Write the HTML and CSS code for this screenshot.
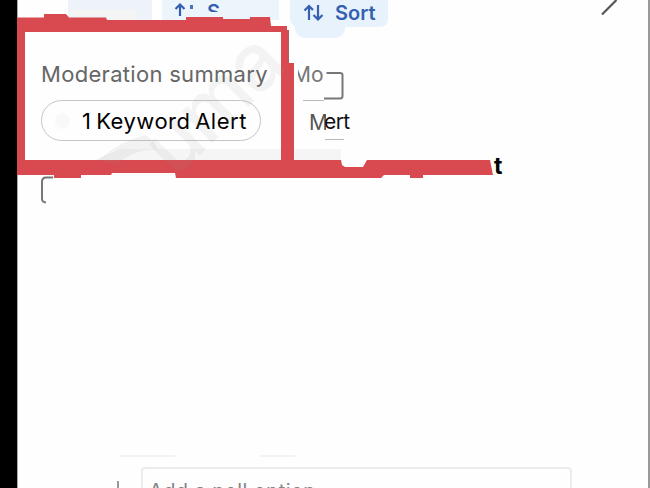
FILE: index.html
```html
<!doctype html>
<html lang="en">
    <head>
        <title>Moderation summary</title>
        <meta charset="utf-8">
        <meta name="viewport" content="width=device-width">
        <link rel="stylesheet" href="styles.css">
    </head>
    <body>
        <div class="rail"></div>
        <main>
            <header class="toolbar">
                <div class="chip chip-cut">
                    <svg width="12" height="16" viewBox="0 0 12 16"><path d="M6 15V4M1.5 8L6 3.5L10.500 8"/></svg>
                    <i class="dot"></i>
                    <span class="cut-s">S</span>
                </div>
                <div class="chip chip-sort">
                    <svg width="23" height="18" viewBox="0 0 23 18"><path d="M6 16V2M1.500 6.500L6 2L10 6M15 1V15M10.500 11L15 15.500L19.500 11"/></svg>
                    <span>Sort</span>
                </div>
                <svg class="pen" width="18" height="17" viewBox="0 0 18 17"><path d="M1 14.500L15.500 0"/></svg>
            </header>

            <div class="summary">
                <section class="card">
                    <h2>Moderation summary</h2>
                    <div class="pill"><i class="pill-icon"></i><span>1 Keyword Alert</span></div>
                </section>
                <section class="remnant">
                    <div class="remnant-title"><span>Mo</span></div>
                    <div class="remnant-alert"><span class="m">M</span><span class="ert">ert</span></div>
                </section>
            </div>

            <footer class="poll">
                <div class="rules"><i></i><i></i></div>
                <div class="poll-row">
                    <i class="tick"></i>
                    <div class="poll-input">Add a poll option</div>
                </div>
            </footer>
        </main>

        <!-- red highlight frame, with the loose box corners around it -->
        <svg class="marks" width="650" height="488" viewBox="0 0 650 488">
            <path class="shade" d="M72 10H136V20H106L104 16H68ZM120 149H281V160H95ZM295 149H341V163H295Z"/>
            <path class="frame" fill-rule="evenodd" d="M17 17.500H44V14H66L69 17.500H106L107 20H186V17H223V19H250V17H270L271 26H287V30H289V63H294V160H341L342 165L345 167H363L367 160H490L493 175H423V178H410V175H384L381 178H176L175 173H112L111 175H81V178H54V175H17ZM25 32V160H281V32Z"/>
            <path class="corner" d="M326.500 73H340Q342.500 73 342.500 75V96Q342.500 98.500 340 98.500H324M53 177.500H46Q42 177.500 42 182V199Q42 202 46 202.500"/>
            <path class="hair" d="M303 100.500H324M325 139.500H344"/>
            <path class="edge" d="M288.500 30V63"/>
            <path class="smear" d="M98 160Q122 140 146 135Q156 142 158 150Q135 148 116 165Z"/>
        </svg>
        <span class="watermark">uma</span>
        <b class="tail">t</b>
    </body>
</html>
```

FILE: styles.css
```css
* {
    box-sizing: border-box;
}
body {
    display: flex;
    position: relative;
    margin: 0;
    height: 488px;
    overflow: hidden;
    background: #fefefe;
    color: #111;
    font-family: Inter, "Liberation Sans", sans-serif;
}
h2 {
    margin: 0;
    font-weight: 400;
}
svg {
    display: block;
    fill: none;
    stroke: #3560b2;
    stroke-width: 2.2;
}
.rail {
    width: 17px;
    background: #000;
}
main {
    flex: 1;
    display: flex;
    flex-direction: column;
    border-left: 1px solid #aaa;
    border-right: 2px solid #999;
}

/* top bar */
.toolbar {
    display: flex;
    height: 38px;
    padding-left: 50px;
}
.chip {
    display: flex;
    background: #e8f2fc;
    color: #3560b2;
    font-weight: 600;
    font-size: 20px;
}
.chip-cut {
    width: 211px;
    height: 20px;
    padding-left: 106px;
    background: linear-gradient(90deg, #edf3f9 0 84px, #fff 84px 94px, #edf5fc 94px);
}
.chip-cut svg {
    margin-top: 1px;
}
.dot {
    width: 3px;
    height: 4px;
    margin: 5px 0 0 4px;
    background: #4970b9;
}
.cut-s {
    height: 12px;
    margin-left: 14px;
    overflow: hidden;
    line-height: 24px;
}
.chip-sort {
    position: relative;
    width: 98px;
    height: 27px;
    margin-left: 11px;
    padding-left: 13px;
    border-radius: 0 0 8px 8px;
}
.chip-sort::after {
    content: "";
    position: absolute;
    left: 5px;
    top: 24px;
    width: 50px;
    height: 14px;
    background: #e8f2fc;
    border-radius: 0 0 10px 10px;
}
.chip-sort svg {
    margin-top: 4px;
}
.chip-sort span {
    margin-left: 9px;
    line-height: 26px;
}
.pen {
    margin-left: 213px;
    stroke: #555;
}

/* summary card and what is left of the one beside it */
.summary {
    display: flex;
    height: 122px;
}
.card {
    width: 263px;
    padding: 21px 0 0 23px;
}
.card h2 {
    height: 30px;
    color: #666;
    font-size: 22px;
    line-height: 30px;
    letter-spacing: 0.3px;
    white-space: nowrap;
}
.pill {
    display: flex;
    align-items: center;
    width: 220px;
    height: 41px;
    margin-top: 11px;
    padding-left: 13px;
    border: 1px solid #c5c5c5;
    border-radius: 21px;
    font-size: 22px;
    white-space: nowrap;
}
.pill-icon {
    width: 15px;
    height: 16px;
    margin-right: 12px;
    border-radius: 8px;
    background: #f9f9f9;
}
.pill span {
    color: #000;
    letter-spacing: 0.5px;
    word-spacing: -2px;
}
.remnant {
    padding: 23px 0 0 17px;
    font-size: 21px;
}
.remnant-title {
    display: flex;
    width: 30px;
    height: 27px;
    overflow: hidden;
    color: #777;
    line-height: 27px;
}
.remnant-title span {
    margin-left: -6px;
}
.remnant-alert {
    display: flex;
    margin-top: 20px;
    padding-left: 11px;
    line-height: 28px;
}
.m {
    width: 17px;
    overflow: hidden;
    color: #555;
    line-height: 30px;
}
.ert {
    margin-left: -2px;
    letter-spacing: -0.6px;
}

/* poll form, running off the bottom */
.poll {
    height: 33px;
    margin-top: auto;
}
.rules {
    display: flex;
    gap: 86px;
    height: 12px;
    padding-left: 101px;
}
.rules i {
    width: 56px;
    height: 2px;
    background: #f2f2f2;
}
.rules i + i {
    width: 34px;
}
.poll-row {
    display: flex;
    height: 21px;
    padding-left: 99px;
    overflow: hidden;
}
.tick {
    width: 2px;
    margin: 14px 22px 0 0;
    background: #999;
}
.poll-input {
    width: 431px;
    height: 50px;
    padding: 10px 0 0 6px;
    border: 2px solid #ececec;
    border-radius: 4px;
    color: #858585;
    font-size: 20px;
    line-height: 25px;
    letter-spacing: 0.4px;
}

/* overlays */
.marks,
.tail,
.watermark {
    position: absolute;
    left: 0;
    top: 0;
}
.marks path {
    stroke: none;
}
.marks .frame {
    fill: #d94a50;
}
.marks .shade {
    fill: #f5f5f5;
}
.marks .smear {
    fill: rgba(150, 150, 150, 0.11);
}
.marks .corner {
    stroke: #777;
    stroke-width: 2;
}
.marks .hair {
    stroke: #bbb;
    stroke-width: 1;
}
.marks .edge {
    stroke: #ac5b60;
    stroke-width: 1;
}
.watermark {
    left: 132px;
    top: 58px;
    color: rgba(150, 150, 150, 0.1);
    font-size: 80px;
    font-weight: 500;
    line-height: 90px;
    letter-spacing: -2px;
    transform: rotate(-45deg);
}
.tail {
    left: 494px;
    top: 151px;
    color: #000;
    font-size: 23px;
    line-height: 30px;
}
```
